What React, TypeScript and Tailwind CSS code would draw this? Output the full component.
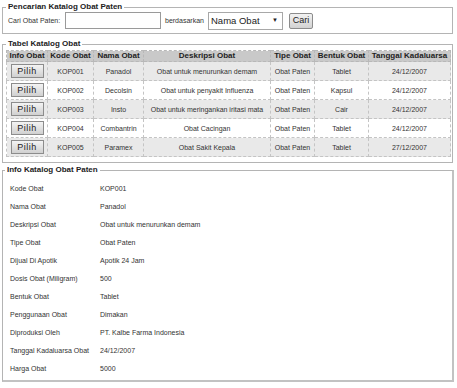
const rows = [
  { kode: "KOP001", nama: "Panadol", desk: "Obat untuk menurunkan demam", tipe: "Obat Paten", bentuk: "Tablet", tgl: "24/12/2007" },
  { kode: "KOP002", nama: "Decolsin", desk: "Obat untuk penyakit Influenza", tipe: "Obat Paten", bentuk: "Kapsul", tgl: "24/12/2007" },
  { kode: "KOP003", nama: "Insto", desk: "Obat untuk meringankan iritasi mata", tipe: "Obat Paten", bentuk: "Cair", tgl: "24/12/2007" },
  { kode: "KOP004", nama: "Combantrin", desk: "Obat Cacingan", tipe: "Obat Paten", bentuk: "Tablet", tgl: "24/12/2007" },
  { kode: "KOP005", nama: "Paramex", desk: "Obat Sakit Kepala", tipe: "Obat Paten", bentuk: "Tablet", tgl: "27/12/2007" },
];

const info = [
  ["Kode Obat", "KOP001"],
  ["Nama Obat", "Panadol"],
  ["Deskripsi Obat", "Obat untuk menurunkan demam"],
  ["Tipe Obat", "Obat Paten"],
  ["Dijual Di Apotik", "Apotik 24 Jam"],
  ["Dosis Obat (Miligram)", "500"],
  ["Bentuk Obat", "Tablet"],
  ["Penggunaan Obat", "Dimakan"],
  ["Diproduksi Oleh", "PT. Kalbe Farma Indonesia"],
  ["Tanggal Kadaluarsa Obat", "24/12/2007"],
  ["Harga Obat", "5000"],
];

const th = "border border-dashed border-[#b8b8b8] px-[2px] font-bold text-[8px] leading-[10px] text-[#222] text-center";
const td = "border border-dashed border-[#c4c4c4] px-[2px] text-center";

export default function App() {
  return (
    <div className="w-[457px] h-[388px] overflow-hidden bg-white pt-[2px] font-['Liberation_Sans',Arial,sans-serif] text-[7px] leading-[9px] text-[#333]">
      {/* pencarian */}
      <fieldset className="ml-[2px] w-[451px] border border-[#b4b4b4] pl-[5px] pb-[4px]">
        <legend className="ml-[-2px] px-[2px] text-[8px] font-bold leading-[10px] text-[#222]">
          Pencarian Katalog Obat Paten
        </legend>
        <div className="flex h-[17px] items-center">
          <span className="w-[57px]">Cari Obat Paten:</span>
          <div className="h-[17px] w-[96px] border border-[#9a9a9a] bg-white" />
          <span className="ml-[4px] w-[43px]">berdasarkan</span>
          <div className="flex h-[18px] w-[75px] items-center justify-between border border-[#a8a8a8] bg-white pl-[2px] pr-[4px] text-[9.5px] text-[#222]">
            <span>Nama Obat</span>
            <span className="text-[6px]">▼</span>
          </div>
          <div className="ml-[6px] flex h-[16px] w-[24px] items-center justify-center rounded-[2px] border border-[#8c8c8c] bg-gradient-to-b from-[#f2f2f2] to-[#d2d2d2] text-[9px] text-[#222]">
            Cari
          </div>
        </div>
      </fieldset>

      {/* tabel */}
      <fieldset className="mt-[5px] ml-[2px] w-[451px] border border-[#b4b4b4] pl-[3px] pr-[1px] pb-[5px]">
        <legend className="px-[2px] text-[8px] font-bold leading-[10px] text-[#222]">
          Tabel Katalog Obat
        </legend>
        <table className="mt-[1px] w-[445px] border-collapse">
          <thead>
            <tr className="h-[11px] bg-[#c9c9c9]">
              <th className={th + " w-[41px]"}>Info Obat</th>
              <th className={th + " w-[46px]"}>Kode Obat</th>
              <th className={th + " w-[50px]"}>Nama Obat</th>
              <th className={th + " w-[127px]"}>Deskripsi Obat</th>
              <th className={th + " w-[44px]"}>Tipe Obat</th>
              <th className={th + " w-[54px]"}>Bentuk Obat</th>
              <th className={th}>Tanggal Kadaluarsa</th>
            </tr>
          </thead>
          <tbody>
            {rows.map((r, i) => (
              <tr key={r.kode} className={i % 2 === 0 ? "h-[19px] bg-[#e9e9e9]" : "h-[19px] bg-white"}>
                <td className={td}>
                  <div className="mx-auto flex h-[14px] w-[33px] items-center justify-center border border-[#8c8c8c] bg-gradient-to-b from-[#f4f4f4] to-[#d0d0d0] text-[9px] tracking-[0.5px] text-[#222]">
                    Pilih
                  </div>
                </td>
                <td className={td}>{r.kode}</td>
                <td className={td}>{r.nama}</td>
                <td className={td}>{r.desk}</td>
                <td className={td}>{r.tipe}</td>
                <td className={td}>{r.bentuk}</td>
                <td className={td}>{r.tgl}</td>
              </tr>
            ))}
          </tbody>
        </table>
      </fieldset>

      {/* info */}
      <fieldset className="mt-[2px] ml-[2px] w-[452px] border-t border-l border-r-2 border-b-2 border-t-[#b4b4b4] border-l-[#b4b4b4] border-r-[#c2c2c2] border-b-[#c2c2c2] pl-[7px] pt-[4px] pb-[3px]">
        <legend className="ml-[-5px] px-[2px] text-[8px] font-bold leading-[10px] text-[#222]">
          Info Katalog Obat Paten
        </legend>
        <div className="flex flex-col">
          {info.map(([k, v]) => (
            <div key={k} className="flex h-[18px] items-center">
              <span className="w-[90px]">{k}</span>
              <span>{v}</span>
            </div>
          ))}
        </div>
      </fieldset>
    </div>
  );
}
